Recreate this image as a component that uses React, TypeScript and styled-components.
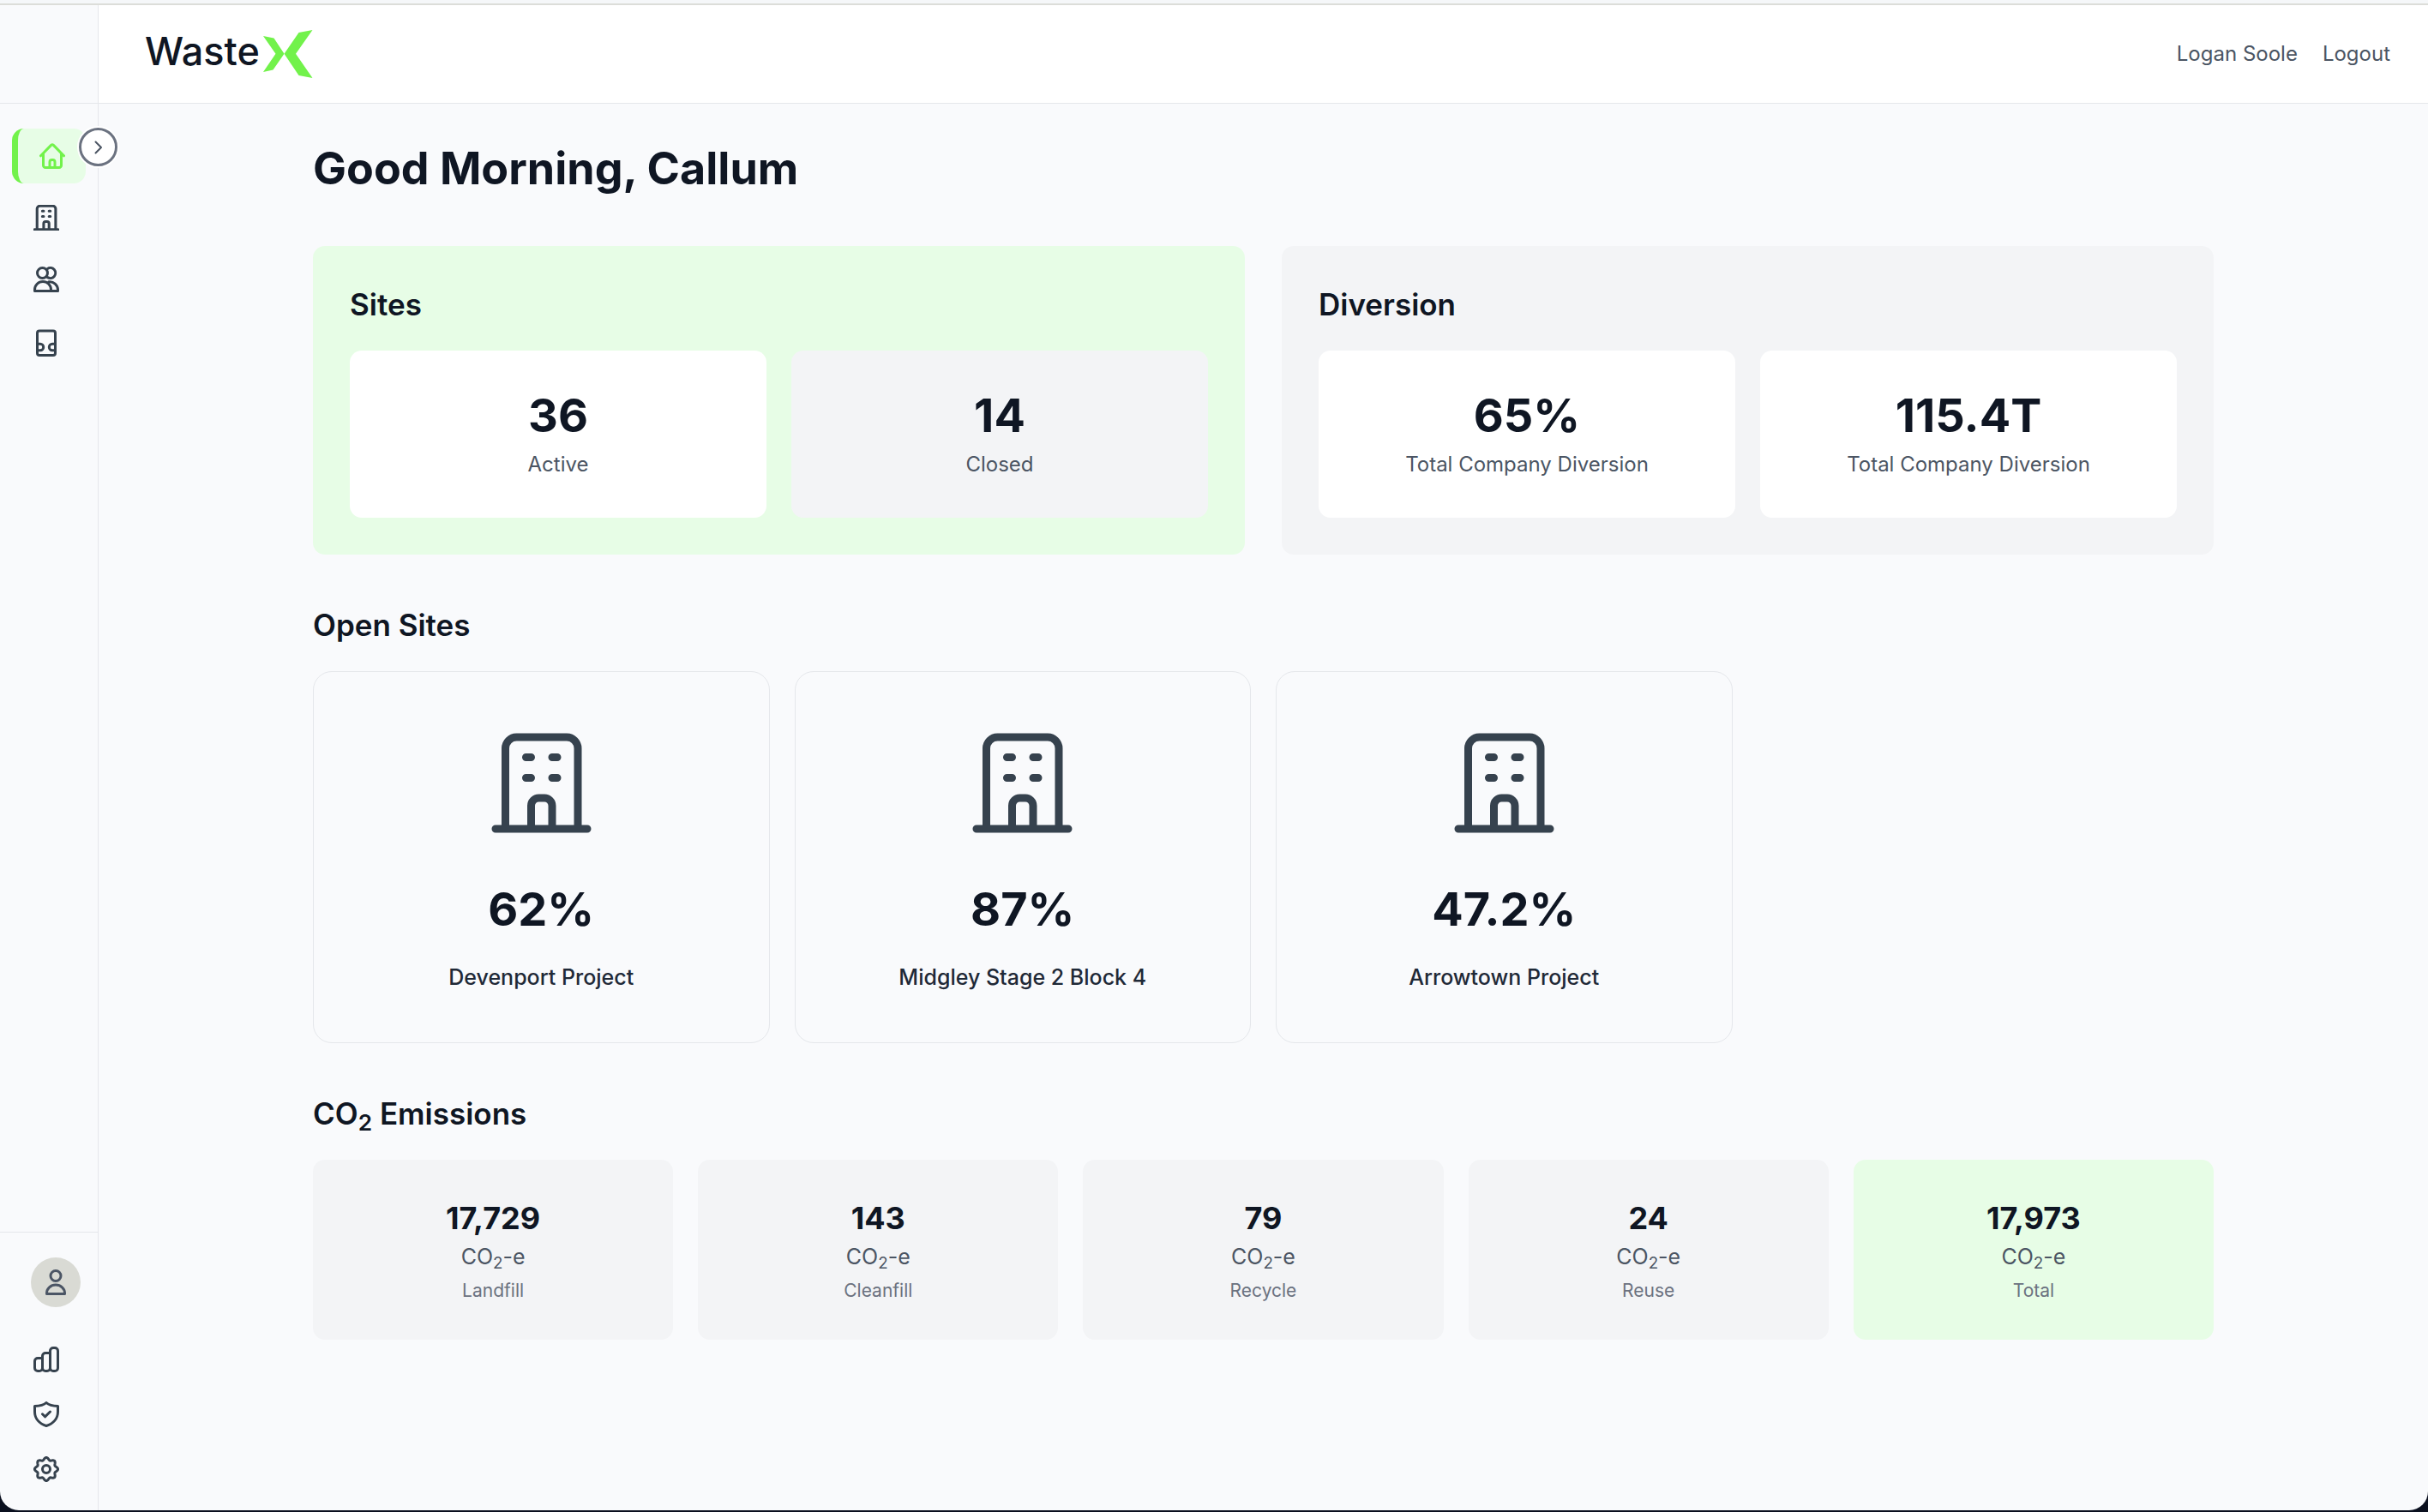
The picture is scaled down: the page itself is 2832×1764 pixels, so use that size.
import React from "react";
import styled, { createGlobalStyle } from "styled-components";

const color = {
  ink: "#0f1623",
  heading: "#1f2937",
  text: "#4b5563",
  muted: "#6b7280",
  icon: "#36424e",
  line: "#e5e7eb",
  page: "#f9fafc",
  panel: "#f3f4f6",
  mint: "#e7fde6",
  lime: "#72f24b",
  frame: "#0b101f",
};

const GlobalStyle = createGlobalStyle`
  *, *::before, *::after { box-sizing: border-box; }
  body {
    margin: 0;
    background: ${color.frame};
    color: ${color.ink};
    font-family: Inter, "Liberation Sans", sans-serif;
    font-size: 25px;
    line-height: 36px;
  }
  h1, h2, p, ul { margin: 0; padding: 0; }
  ul { list-style: none; }
  a { color: inherit; text-decoration: none; }
  button { font: inherit; color: inherit; border: 0; padding: 0; background: none; cursor: pointer; }
  svg { display: block; flex: none; }
  sub { font-size: 75%; line-height: 0; position: relative; bottom: -0.25em; vertical-align: baseline; }
`;

const Window = styled.div`
  display: flex;
  flex-direction: column;
  min-height: calc(100vh - 2px);
  border-radius: 0 0 22px 22px;
  background: ${color.page};
  overflow: hidden;
`;

const TopStrip = styled.div`
  height: 6px;
  background: #f5f7f9;
  border-bottom: 2px solid #dcddd9;
`;

const Shell = styled.div`
  flex: 1;
  display: flex;
`;

const Sidebar = styled.aside`
  position: relative;
  flex: none;
  width: 115px;
  display: flex;
  flex-direction: column;
  border-right: 1px solid ${color.line};
`;

const SidebarTop = styled.div`
  height: 115px;
  border-bottom: 1px solid ${color.line};
`;

const Toggle = styled.button`
  position: absolute;
  top: 143px;
  right: -23px;
  width: 45px;
  height: 45px;
  display: grid;
  place-items: center;
  border: 3px solid ${color.muted};
  border-radius: 50%;
  background: #fff;
  box-shadow: 0 0 0 2px #fff;
  color: ${color.text};
`;

const NavList = styled.ul`
  display: flex;
  flex-direction: column;
  gap: 8px;
  padding: 29px 14px;
`;

const FooterNav = styled.div`
  margin-top: auto;
  padding: 29px 14px 16px;
  border-top: 1px solid ${color.line};
`;

const FooterList = styled.ul`
  padding-top: 29px;
`;

const NavLink = styled.a<{ $active?: boolean }>`
  display: flex;
  align-items: center;
  height: 64px;
  padding-left: 25px;
  border-radius: 14px;
  color: ${color.icon};
  ${(p) =>
    p.$active &&
    `
    border-left: 7px solid ${color.lime};
    background: ${color.mint};
    color: ${color.lime};
  `}
`;

const Avatar = styled.button`
  display: grid;
  place-items: center;
  width: 58px;
  height: 58px;
  margin-left: 22px;
  border-radius: 50%;
  background: #d9dad4;
  color: #4b5565;
`;

const Column = styled.div`
  flex: 1;
  min-width: 0;
`;

const Header = styled.header`
  display: flex;
  align-items: center;
  justify-content: space-between;
  height: 115px;
  padding: 0 44px 0 54px;
  background: #fff;
  border-bottom: 1px solid ${color.line};
`;

const Logo = styled.a`
  display: flex;
  align-items: flex-start;
  gap: 4px;
  color: ${color.ink};
  font-size: 45px;
  font-weight: 500;
  line-height: 50px;
`;

const Account = styled.nav`
  display: flex;
  gap: 29px;
  color: ${color.text};
  font-size: 24px;
`;

const Main = styled.main`
  max-width: 2305px;
  margin: 0 auto;
  padding: 43px 44px;
`;

const Greeting = styled.h1`
  margin-bottom: 58px;
  font-size: 52px;
  font-weight: 700;
  line-height: 65px;
`;

const Title = styled.h2`
  margin-bottom: 29px;
  font-size: 35px;
  font-weight: 600;
  line-height: 50px;
`;

const Grid = styled.div<{ $columns: number; $gap?: number }>`
  display: grid;
  grid-template-columns: repeat(${(p) => p.$columns}, minmax(0, 1fr));
  gap: ${(p) => p.$gap ?? 29}px;
`;

const Section = styled.section`
  margin-top: 57px;
`;

const Panel = styled.section<{ $mint?: boolean }>`
  padding: 43px;
  border-radius: 14px;
  background: ${(p) => (p.$mint ? color.mint : color.panel)};
`;

const Stat = styled.div<{ $dim?: boolean }>`
  padding: 43px 43px 44px;
  border-radius: 14px;
  background: ${(p) => (p.$dim ? color.panel : "#fff")};
  text-align: center;
`;

const Figure = styled.p`
  font-size: 54px;
  font-weight: 700;
  line-height: 65px;
`;

const StatLabel = styled.p`
  margin-top: 7px;
  color: ${color.text};
  font-size: 24px;
`;

const SiteCard = styled.a`
  display: flex;
  flex-direction: column;
  align-items: center;
  padding: 58px 43px;
  border: 1px solid ${color.line};
  border-radius: 22px;
`;

const SiteIcon = styled.span`
  display: grid;
  place-items: center;
  height: 143px;
  margin-bottom: 43px;
  color: ${color.icon};
`;

const SiteName = styled.p`
  margin-top: 29px;
  color: ${color.heading};
  font-weight: 500;
`;

const EmissionCard = styled.div<{ $mint?: boolean }>`
  padding: 43px;
  border-radius: 14px;
  background: ${(p) => (p.$mint ? color.mint : color.panel)};
  text-align: center;
`;

const Amount = styled.p`
  font-size: 36px;
  font-weight: 700;
  line-height: 50px;
`;

const Unit = styled.p`
  padding: 2px 0 7px;
  color: ${color.text};
`;

const Kind = styled.p`
  color: ${color.muted};
  font-size: 21px;
  line-height: 29px;
`;

type IconProps = { width?: number; height?: number; box?: string; stroke?: number; children: React.ReactNode };

const Icon = ({ width = 30, height = 30, box, stroke = 3, children }: IconProps) => (
  <svg
    width={width}
    height={height}
    viewBox={box ?? `0 0 ${width} ${height}`}
    fill="none"
    stroke="currentColor"
    strokeWidth={stroke}
    strokeLinecap="round"
    strokeLinejoin="round"
    aria-hidden="true"
  >
    {children}
  </svg>
);

const Building = ({ size = 30, stroke = 12 }: { size?: number; stroke?: number }) => (
  <Icon width={size} height={size} box="0 0 117 117" stroke={stroke}>
    <path d="M5 112H112M16.500 112V18A13 13 0 0 1 29.500 5H88A13 13 0 0 1 101 18V112M46.500 112V85A9 9 0 0 1 55.500 76H62A9 9 0 0 1 71 85V112M40.500 28.500H46.500M71 28.500H77M40.500 52.500H46.500M71 52.500H77" />
  </Icon>
);

const Home = () => (
  <Icon>
    <path d="M1.500 14.800L13.600 2.400Q15 1.200 16.400 2.400L28.500 14.800M4.500 12V26A2.500 2.500 0 0 0 7 28.500H23A2.500 2.500 0 0 0 25.500 26V12M12 28V22A2.500 2.500 0 0 1 14.500 19.500H15.500A2.500 2.500 0 0 1 18 22V28" />
  </Icon>
);

const Users = () => (
  <Icon>
    <circle cx="10.500" cy="7.500" r="6" />
    <path d="M16.500 2.400A6 6 0 1 1 16.500 12.600M1.500 28.500V27A9.500 9.500 0 0 1 20.500 27V28.500ZM18 17.800A9.500 9.500 0 0 1 28.500 27V28.500H20.500" />
  </Icon>
);

const Doorway = () => (
  <Icon height={36} box="0 -4 30 36">
    <rect x="4.500" y="2" width="21" height="28.500" rx="2.500" />
    <path d="M4.500 17.300H8A3.700 3.700 0 0 1 8 24.700H4.500M25.500 17.300H22A3.700 3.700 0 0 0 22 24.700H25.500" />
  </Icon>
);

const Person = () => (
  <Icon width={24}>
    <circle cx="12" cy="7.500" r="6" />
    <path d="M1.500 28.500V27.500A10.500 9.500 0 0 1 22.500 27.500V28.500Z" />
  </Icon>
);

const Chart = () => (
  <Icon>
    <path d="M10.500 13.500H5A3.500 3.500 0 0 0 1.500 17V25A3.500 3.500 0 0 0 5 28.500H7A3.500 3.500 0 0 0 10.500 25V11A3.500 3.500 0 0 1 14 7.500H19.500V25A3.500 3.500 0 0 1 16 28.500H14A3.500 3.500 0 0 1 10.500 25M19.500 5A3.500 3.500 0 0 1 23 1.500H25A3.500 3.500 0 0 1 28.500 5V25A3.500 3.500 0 0 1 25 28.500H23A3.500 3.500 0 0 1 19.500 25Z" />
  </Icon>
);

const Shield = () => (
  <Icon>
    <path d="M15 1.500Q11 5.200 1.500 5.500V12C1.500 20 7 26 15 28.500C23 26 28.500 20 28.500 12V5.500Q19 5.200 15 1.500ZM10.500 14.800L13.500 17.800L19.500 12" />
  </Icon>
);

const cogPath =
  Array.from({ length: 96 }, (_, i) => {
    const angle = (i / 96) * Math.PI * 2;
    const radius = 12.2 + 1.4 * Math.cos(8 * angle);
    return `${i ? "L" : "M"}${(15 + radius * Math.sin(angle)).toFixed(2)} ${(15 - radius * Math.cos(angle)).toFixed(2)}`;
  }).join("") + "Z";

const Cog = () => (
  <Icon>
    <path d={cogPath} />
    <circle cx="15" cy="15" r="4.500" />
  </Icon>
);

const LogoMark = () => (
  <svg width="58" height="56" viewBox="0 0 58 56" fill={color.lime} aria-hidden="true">
    <path d="M0 7L12.500 9.500L24.500 27.700L11.500 46.500L0 49L14.500 27.700Z" />
    <path d="M57.500 0L41.500 3L24.500 27.700L41.500 53L57.500 56L38 27.700Z" />
  </svg>
);

const primaryNav = [
  { label: "Home", icon: <Home />, active: true },
  { label: "Sites", icon: <Building /> },
  { label: "People", icon: <Users /> },
  { label: "Bins", icon: <Doorway /> },
];

const secondaryNav = [
  { label: "Reports", icon: <Chart /> },
  { label: "Security", icon: <Shield /> },
  { label: "Settings", icon: <Cog /> },
];

const summaries = [
  {
    title: "Sites",
    mint: true,
    stats: [
      { value: "36", label: "Active" },
      { value: "14", label: "Closed", dim: true },
    ],
  },
  {
    title: "Diversion",
    stats: [
      { value: "65%", label: "Total Company Diversion" },
      { value: "115.4T", label: "Total Company Diversion" },
    ],
  },
] as { title: string; mint?: boolean; stats: { value: string; label: string; dim?: boolean }[] }[];

const sites = [
  { rate: "62%", name: "Devenport Project" },
  { rate: "87%", name: "Midgley Stage 2 Block 4" },
  { rate: "47.2%", name: "Arrowtown Project" },
];

const emissions = [
  { amount: "17,729", kind: "Landfill" },
  { amount: "143", kind: "Cleanfill" },
  { amount: "79", kind: "Recycle" },
  { amount: "24", kind: "Reuse" },
  { amount: "17,973", kind: "Total" },
];

export default function App() {
  return (
    <>
      <GlobalStyle />
      <Window>
        <TopStrip />
        <Shell>
          <Sidebar>
            <SidebarTop />
            <nav aria-label="Main">
              <NavList>
                {primaryNav.map((item) => (
                  <li key={item.label}>
                    <NavLink href="#" aria-label={item.label} $active={item.active}>
                      {item.icon}
                    </NavLink>
                  </li>
                ))}
              </NavList>
            </nav>
            <FooterNav>
              <Avatar aria-label="Profile">
                <Person />
              </Avatar>
              <FooterList>
                {secondaryNav.map((item) => (
                  <li key={item.label}>
                    <NavLink href="#" aria-label={item.label}>
                      {item.icon}
                    </NavLink>
                  </li>
                ))}
              </FooterList>
            </FooterNav>
            <Toggle aria-label="Expand sidebar">
              <Icon width={10} height={16} stroke={2}>
                <path d="M1.500 1.500L8 8L1.500 14.500" />
              </Icon>
            </Toggle>
          </Sidebar>
          <Column>
            <Header>
              <Logo href="#">
                Waste
                <LogoMark />
              </Logo>
              <Account aria-label="Account">
                <a href="#">Logan Soole</a>
                <a href="#">Logout</a>
              </Account>
            </Header>
            <Main>
              <Greeting>Good Morning, Callum</Greeting>
              <Grid $columns={2} $gap={43}>
                {summaries.map((group) => (
                  <Panel key={group.title} $mint={group.mint}>
                    <Title>{group.title}</Title>
                    <Grid $columns={2}>
                      {group.stats.map((stat) => (
                        <Stat key={stat.value} $dim={stat.dim}>
                          <Figure>{stat.value}</Figure>
                          <StatLabel>{stat.label}</StatLabel>
                        </Stat>
                      ))}
                    </Grid>
                  </Panel>
                ))}
              </Grid>
              <Section>
                <Title>Open Sites</Title>
                <Grid $columns={4}>
                  {sites.map((site) => (
                    <SiteCard key={site.name} href="#">
                      <SiteIcon>
                        <Building size={117} stroke={9} />
                      </SiteIcon>
                      <Figure>{site.rate}</Figure>
                      <SiteName>{site.name}</SiteName>
                    </SiteCard>
                  ))}
                </Grid>
              </Section>
              <Section>
                <Title>
                  CO<sub>2</sub> Emissions
                </Title>
                <Grid $columns={5}>
                  {emissions.map((item) => (
                    <EmissionCard key={item.kind} $mint={item.kind === "Total"}>
                      <Amount>{item.amount}</Amount>
                      <Unit>
                        CO<sub>2</sub>-e
                      </Unit>
                      <Kind>{item.kind}</Kind>
                    </EmissionCard>
                  ))}
                </Grid>
              </Section>
            </Main>
          </Column>
        </Shell>
      </Window>
    </>
  );
}
